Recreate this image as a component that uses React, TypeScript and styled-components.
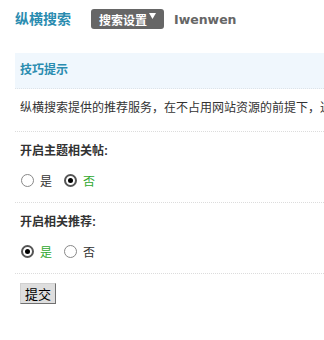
import React from 'react';
import styled, { createGlobalStyle } from 'styled-components';

const GlobalStyle = createGlobalStyle`
  html, body {
    margin: 0;
    padding: 0;
    background: #fff;
    overflow: hidden;
  }
  body {
    font-family: "Liberation Sans", "Noto Sans CJK SC", sans-serif;
    font-size: 12px;
    color: #333;
  }
`;

const Page = styled.div`
  width: 324px;
  height: 340px;
  overflow: hidden;
`;

const Header = styled.div`
  display: flex;
  align-items: center;
  height: 20px;
  padding: 9px 0 0 15px;
  margin-bottom: 24px;
`;

const Title = styled.h3`
  margin: 0;
  font-size: 14px;
  font-weight: bold;
  color: #2a8cb0;
  line-height: 20px;
  white-space: nowrap;
`;

const Badge = styled.span`
  display: flex;
  align-items: center;
  height: 20px;
  margin-left: 20px;
  padding: 0 8px;
  border-radius: 3px;
  background: #666;
  color: #fff;
  font-weight: bold;
  font-size: 12px;
  white-space: nowrap;
`;

const Caret = styled.svg`
  margin-left: 2px;
  align-self: flex-start;
  margin-top: 4px;
`;

const UserName = styled.span`
  margin-left: 10px;
  font-family: "DejaVu Sans", sans-serif;
  font-weight: bold;
  font-size: 12.5px;
  color: #666;
`;

const TipsBar = styled.div`
  margin-left: 15px;
  padding-left: 5px;
  height: 35px;
  line-height: 35px;
  background: #f0f7fd;
  border-bottom: 1px dotted #dde3e8;
  color: #2a8cb0;
  font-weight: bold;
`;

const Row = styled.div<{ $top: number; $bottom: number }>`
  margin-left: 15px;
  padding: ${({ $top, $bottom }) => `${$top}px 0 ${$bottom}px 5px`};
  border-bottom: 1px dotted #dcdcdc;
  white-space: nowrap;
  overflow: hidden;
`;

const Line = styled.div`
  line-height: 24px;
`;

const Label = styled.div`
  line-height: 24px;
  font-weight: bold;
  color: #333;
`;

const Options = styled.div`
  display: flex;
  align-items: center;
  height: 24px;
  margin-top: 5px;
  padding-left: 1px;
`;

const Option = styled.label<{ $checked?: boolean }>`
  display: flex;
  align-items: center;
  margin-right: 12px;
  color: ${({ $checked }) => ($checked ? '#2fa82f' : '#333')};
`;

const Radio = styled.span<{ $checked?: boolean }>`
  box-sizing: border-box;
  width: 13px;
  height: 13px;
  margin-right: 6px;
  border-radius: 50%;
  background: #fff;
  border: ${({ $checked }) => ($checked ? '2px solid #555' : '1px solid #888')};
  display: flex;
  align-items: center;
  justify-content: center;

  &::after {
    content: '';
    display: ${({ $checked }) => ($checked ? 'block' : 'none')};
    width: 5px;
    height: 5px;
    border-radius: 50%;
    background: #000;
  }
`;

const Submit = styled.button`
  margin: 9px 0 0 20px;
  width: 36px;
  height: 21px;
  padding: 0;
  font-family: "Noto Sans CJK SC", sans-serif;
  font-size: 13px;
  line-height: 19px;
  color: #000;
  background: #dedede;
  border: 1px solid;
  border-color: #d0d0d0 #707070 #707070 #d0d0d0;
  border-radius: 0;
`;

type Choice = { text: string; checked: boolean };

const Setting: React.FC<{ label: string; choices: Choice[] }> = ({ label, choices }) => (
  <Row $top={7} $bottom={10}>
    <Label>{label}</Label>
    <Options>
      {choices.map((c) => (
        <Option key={c.text} $checked={c.checked}>
          <Radio $checked={c.checked} />
          {c.text}
        </Option>
      ))}
    </Options>
  </Row>
);

export default function App() {
  return (
    <Page>
      <GlobalStyle />
      <Header>
        <Title>纵横搜索</Title>
        <Badge>
          搜索设置
          <Caret width="7" height="6" viewBox="0 0 7 6">
            <path d="M0 0h7L3.5 6z" fill="#fff" />
          </Caret>
        </Badge>
        <UserName>Iwenwen</UserName>
      </Header>
      <TipsBar>技巧提示</TipsBar>
      <Row $top={7} $bottom={11}>
        <Line>纵横搜索提供的推荐服务，在不占用网站资源的前提下，通过分析帖子内容为用户推荐相关主题。</Line>
      </Row>
      <Setting
        label="开启主题相关帖:"
        choices={[
          { text: '是', checked: false },
          { text: '否', checked: true },
        ]}
      />
      <Setting
        label="开启相关推荐:"
        choices={[
          { text: '是', checked: true },
          { text: '否', checked: false },
        ]}
      />
      <Submit>提交</Submit>
    </Page>
  );
}
